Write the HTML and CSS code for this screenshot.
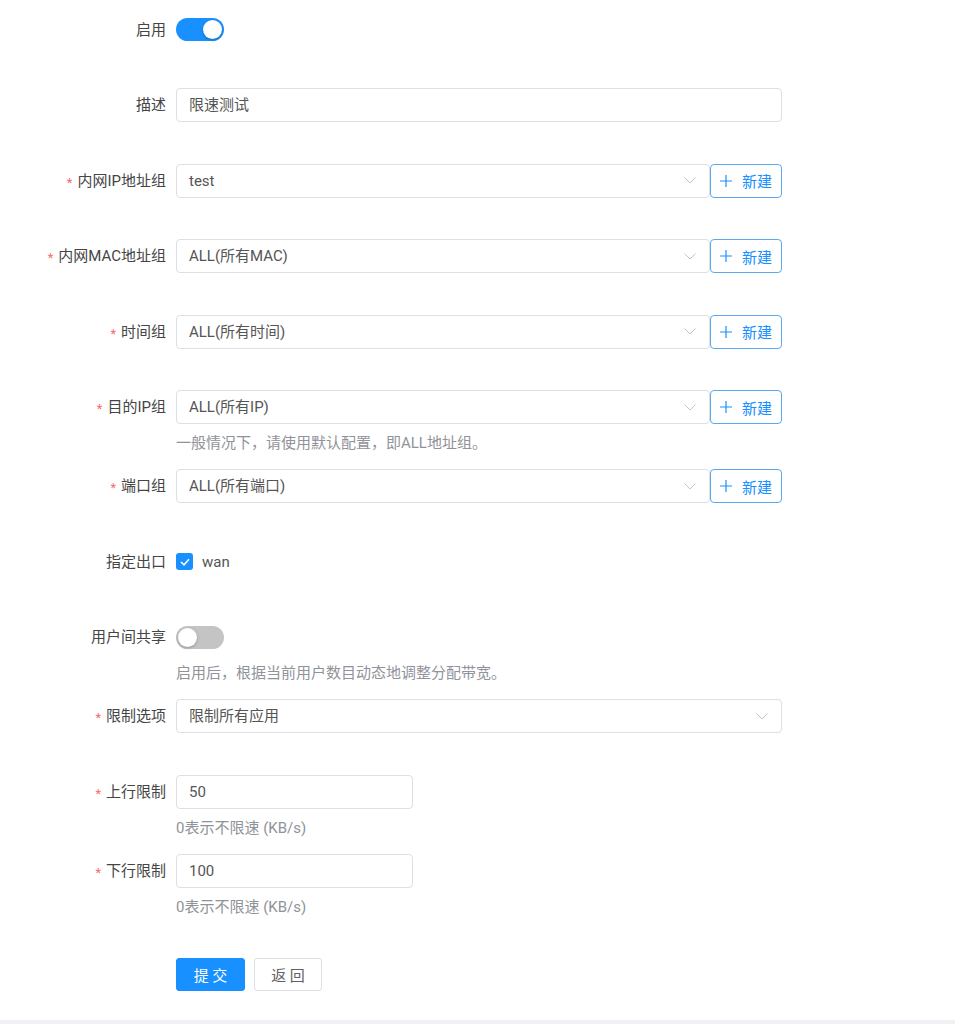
FILE: index.html
```html
<!DOCTYPE html>
<html lang="zh-CN">
<head>
    <meta charset="UTF-8">
    <title>限速规则</title>
    <link rel="stylesheet" href="styles.css">
</head>
<body>
    <div class="page">
        <form class="form">
            <div class="form-item">
                <label class="form-label">启用</label>
                <div class="form-content">
                    <div class="control-row"><span class="switch is-on"><span class="switch-knob"></span></span></div>
                </div>
            </div>

            <div class="form-item">
                <label class="form-label">描述</label>
                <div class="form-content">
                    <div class="control-row"><div class="input">限速测试</div></div>
                </div>
            </div>

            <div class="form-item">
                <label class="form-label required">内网IP地址组</label>
                <div class="form-content">
                    <div class="control-row">
                        <div class="input select">test<svg class="arrow" width="12" height="7" viewBox="0 0 12 7"><path d="M0.5 0.5 L6 6 L11.5 0.5" fill="none" stroke="#c0c4cc" stroke-width="1"/></svg></div>
                        <button type="button" class="btn-new"><svg width="12" height="12" viewBox="0 0 12 12"><path d="M6 0 V12 M0 6 H12" stroke="#1890ff" stroke-width="1.2"/></svg>新建</button>
                    </div>
                </div>
            </div>

            <div class="form-item">
                <label class="form-label required">内网MAC地址组</label>
                <div class="form-content">
                    <div class="control-row">
                        <div class="input select">ALL(所有MAC)<svg class="arrow" width="12" height="7" viewBox="0 0 12 7"><path d="M0.5 0.5 L6 6 L11.5 0.5" fill="none" stroke="#c0c4cc" stroke-width="1"/></svg></div>
                        <button type="button" class="btn-new"><svg width="12" height="12" viewBox="0 0 12 12"><path d="M6 0 V12 M0 6 H12" stroke="#1890ff" stroke-width="1.2"/></svg>新建</button>
                    </div>
                </div>
            </div>

            <div class="form-item">
                <label class="form-label required">时间组</label>
                <div class="form-content">
                    <div class="control-row">
                        <div class="input select">ALL(所有时间)<svg class="arrow" width="12" height="7" viewBox="0 0 12 7"><path d="M0.5 0.5 L6 6 L11.5 0.5" fill="none" stroke="#c0c4cc" stroke-width="1"/></svg></div>
                        <button type="button" class="btn-new"><svg width="12" height="12" viewBox="0 0 12 12"><path d="M6 0 V12 M0 6 H12" stroke="#1890ff" stroke-width="1.2"/></svg>新建</button>
                    </div>
                </div>
            </div>

            <div class="form-item has-help">
                <label class="form-label required">目的IP组</label>
                <div class="form-content">
                    <div class="control-row">
                        <div class="input select">ALL(所有IP)<svg class="arrow" width="12" height="7" viewBox="0 0 12 7"><path d="M0.5 0.5 L6 6 L11.5 0.5" fill="none" stroke="#c0c4cc" stroke-width="1"/></svg></div>
                        <button type="button" class="btn-new"><svg width="12" height="12" viewBox="0 0 12 12"><path d="M6 0 V12 M0 6 H12" stroke="#1890ff" stroke-width="1.2"/></svg>新建</button>
                    </div>
                    <div class="help">一般情况下，请使用默认配置，即ALL地址组。</div>
                </div>
            </div>

            <div class="form-item">
                <label class="form-label required">端口组</label>
                <div class="form-content">
                    <div class="control-row">
                        <div class="input select">ALL(所有端口)<svg class="arrow" width="12" height="7" viewBox="0 0 12 7"><path d="M0.5 0.5 L6 6 L11.5 0.5" fill="none" stroke="#c0c4cc" stroke-width="1"/></svg></div>
                        <button type="button" class="btn-new"><svg width="12" height="12" viewBox="0 0 12 12"><path d="M6 0 V12 M0 6 H12" stroke="#1890ff" stroke-width="1.2"/></svg>新建</button>
                    </div>
                </div>
            </div>

            <div class="form-item">
                <label class="form-label">指定出口</label>
                <div class="form-content">
                    <div class="control-row">
                        <span class="checkbox"><svg width="10" height="8" viewBox="0 0 10 8"><path d="M1 4 L4 6.8 L9 1.2" fill="none" stroke="#fff" stroke-width="1.6"/></svg></span>
                        <span class="checkbox-text">wan</span>
                    </div>
                </div>
            </div>

            <div class="form-item has-help">
                <label class="form-label">用户间共享</label>
                <div class="form-content">
                    <div class="control-row"><span class="switch"><span class="switch-knob"></span></span></div>
                    <div class="help">启用后，根据当前用户数目动态地调整分配带宽。</div>
                </div>
            </div>

            <div class="form-item">
                <label class="form-label required">限制选项</label>
                <div class="form-content">
                    <div class="control-row">
                        <div class="input select">限制所有应用<svg class="arrow" width="12" height="7" viewBox="0 0 12 7"><path d="M0.5 0.5 L6 6 L11.5 0.5" fill="none" stroke="#c0c4cc" stroke-width="1"/></svg></div>
                    </div>
                </div>
            </div>

            <div class="form-item has-help">
                <label class="form-label required">上行限制</label>
                <div class="form-content">
                    <div class="control-row"><div class="input input-short">50</div></div>
                    <div class="help">0表示不限速 (KB/s)</div>
                </div>
            </div>

            <div class="form-item has-help">
                <label class="form-label required">下行限制</label>
                <div class="form-content">
                    <div class="control-row"><div class="input input-short">100</div></div>
                    <div class="help">0表示不限速 (KB/s)</div>
                </div>
            </div>

            <div class="form-item form-actions">
                <label class="form-label"></label>
                <div class="form-content">
                    <div class="control-row">
                        <button type="button" class="btn btn-primary">提 交</button>
                        <button type="button" class="btn">返 回</button>
                    </div>
                </div>
            </div>
        </form>
    </div>
</body>
</html>
```

FILE: styles.css
```css
body {
    margin: 0;
    background: #f0f0f5;
    font-family: Roboto, "Noto Sans CJK SC", sans-serif;
    font-size: 15px;
    color: #606266;
}

.page {
    background: #fff;
    padding: 12.5px 0 29px;
}

.form-item {
    display: flex;
    margin-bottom: 41.5px;
}

.form-item.has-help {
    margin-bottom: 15px;
}

.form-label {
    width: 176px;
    height: 34px;
    box-sizing: border-box;
    padding-right: 10px;
    text-align: right;
    line-height: 34px;
    color: #454545;
    flex-shrink: 0;
}

.form-label.required::before {
    content: "*";
    color: #f56c6c;
    font-size: 13px;
    line-height: 1;
    margin-right: 5px;
    vertical-align: -1px;
}

.form-content {
    width: 606px;
    display: flex;
    flex-direction: column;
}

.control-row {
    display: flex;
    align-items: center;
    height: 34px;
}

.input {
    flex: 1;
    height: 34px;
    box-sizing: border-box;
    border: 1px solid #dcdfe6;
    border-radius: 4px;
    padding: 0 12px;
    line-height: 32px;
    color: #555;
    display: flex;
    align-items: center;
}

.input-short {
    flex: none;
    width: 237px;
}

.select .arrow {
    margin-left: auto;
    margin-right: 1px;
}

.btn-new {
    width: 72px;
    height: 34px;
    box-sizing: border-box;
    border: 1px solid #5aa9f0;
    border-radius: 4px;
    background: #fff;
    color: #1890ff;
    font-family: inherit;
    font-size: 15px;
    display: flex;
    align-items: center;
    justify-content: center;
    gap: 10px;
    padding: 0;
}

.help {
    margin-top: 8px;
    line-height: 22px;
    color: #909399;
}

.switch {
    position: relative;
    width: 48px;
    height: 23px;
    border-radius: 12px;
    background: #c4c4c4;
}

.switch-knob {
    position: absolute;
    top: 2px;
    left: 2px;
    width: 19px;
    height: 19px;
    border-radius: 50%;
    background: #fff;
    box-shadow: 0 1px 3px rgba(0, 0, 0, 0.25);
}

.switch.is-on {
    background: #1890ff;
}

.switch.is-on .switch-knob {
    left: 27px;
}

.checkbox {
    width: 17px;
    height: 17px;
    border-radius: 3px;
    background: #1890ff;
    display: flex;
    align-items: center;
    justify-content: center;
}

.checkbox-text {
    margin-left: 9px;
    color: #555;
}

.form-actions {
    margin-top: 39.5px;
    margin-bottom: 0;
}

.btn {
    height: 33px;
    width: 68px;
    box-sizing: border-box;
    border: 1px solid #dcdfe6;
    border-radius: 3px;
    background: #fff;
    color: #606266;
    font-family: inherit;
    font-size: 15px;
    padding: 0;
    margin-right: 9px;
}

.btn-primary {
    width: 69px;
    background: #1890ff;
    border-color: #1890ff;
    color: #fff;
}
```
